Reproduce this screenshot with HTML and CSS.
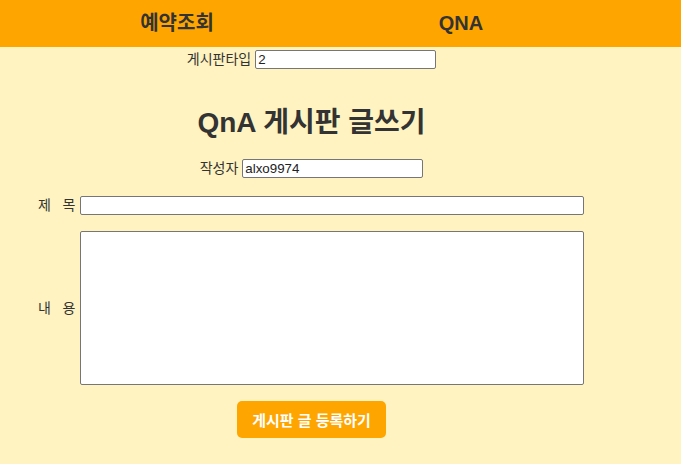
FILE: index.html
```html
<!DOCTYPE html>
<html lang="ko">
<head>
<meta charset="utf-8">
<title>QnA 게시판 글쓰기</title>
<link rel="stylesheet" href="styles.css">
</head>
<body>
<header class="nav">
  <a class="nav-item">예약조회</a>
  <a class="nav-item">QNA</a>
</header>
<main class="page">
  <div class="inline-row type-row">
    <label class="label">게시판타입</label>
    <input class="field field-short" type="text" value="2">
  </div>
  <h1 class="title">QnA 게시판 글쓰기</h1>
  <div class="inline-row writer-row">
    <label class="label">작성자</label>
    <input class="field field-short" type="text" value="alxo9974">
  </div>
  <div class="form-grid">
    <label class="label grid-label">제&nbsp;&nbsp;&nbsp;목</label>
    <input class="field field-wide" type="text">
    <label class="label grid-label">내&nbsp;&nbsp;&nbsp;용</label>
    <textarea class="field field-area"></textarea>
  </div>
  <div class="actions">
    <button class="submit" type="button">게시판 글 등록하기</button>
  </div>
</main>
</body>
</html>
```
FILE: styles.css
```css
* { box-sizing: border-box; }

html, body {
  margin: 0;
  padding: 0;
  background: #fff4c1;
  color: #333333;
  font-family: "Liberation Sans", "Noto Sans CJK KR", sans-serif;
}

body { min-height: 464px; }

.nav {
  background: #ffa500;
  height: 47px;
  display: grid;
  grid-template-columns: 284px 284px;
  padding-left: 35px;
  align-items: center;
  justify-items: center;
}

.nav-item {
  font-size: 20px;
  font-weight: bold;
  color: #333333;
  text-decoration: none;
  line-height: 24px;
  margin-bottom: 2px;
}

.page {
  width: 623px;
  text-align: center;
}

.inline-row {
  display: flex;
  justify-content: center;
  align-items: center;
}

.type-row {
  margin-top: 3px;
  gap: 4px;
}

.writer-row {
  margin-top: 19px;
  gap: 4px;
}

.label {
  font-size: 14px;
  color: #333333;
  line-height: 19px;
}

.field {
  font-family: "Liberation Sans", "Noto Sans CJK KR", sans-serif;
  font-size: 13.33px;
  color: #222;
  background: #ffffff;
  border: 1px solid #767676;
  border-radius: 2px;
  padding: 1px 2px;
  margin: 0;
}

.field-short {
  width: 181px;
  height: 19px;
}

.title {
  margin: 37px 0 0;
  font-size: 28px;
  line-height: 34px;
  font-weight: bold;
  color: #333333;
}

.form-grid {
  margin: 18px 0 0 38px;
  display: grid;
  grid-template-columns: 38px 504px;
  column-gap: 4px;
  row-gap: 16px;
  align-items: center;
  text-align: left;
}

.grid-label { white-space: nowrap; }

.field-wide {
  width: 504px;
  height: 19px;
}

.field-area {
  width: 504px;
  height: 154px;
  resize: none;
  display: block;
}

.actions {
  margin-top: 16px;
  display: flex;
  justify-content: center;
}

.submit {
  width: 149px;
  height: 37px;
  border: none;
  border-radius: 5px;
  background: #ffa500;
  color: #ffffff;
  font-family: "Liberation Sans", "Noto Sans CJK KR", sans-serif;
  font-size: 15px;
  font-weight: bold;
  padding: 0;
}
```
